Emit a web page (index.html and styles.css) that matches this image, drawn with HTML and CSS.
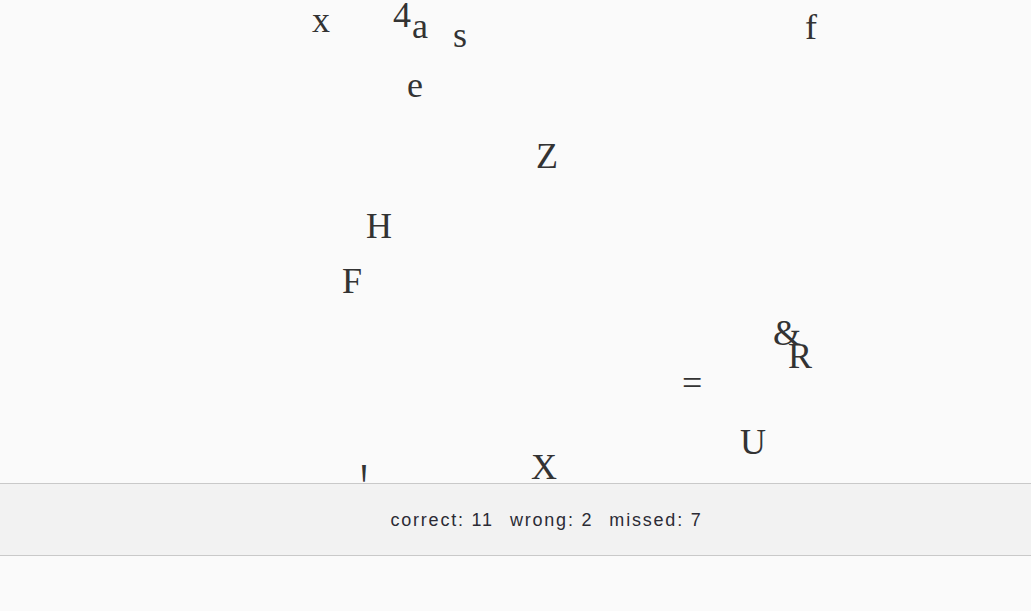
FILE: index.html
```html
<!DOCTYPE html>
<html>
<head>
<meta charset="utf-8">
<link rel="stylesheet" href="styles.css">
</head>
<body>
<div class="stage">
  <span class="ch" style="left:312px;top:2px">x</span>
  <span class="ch" style="left:393px;top:-3px">4</span>
  <span class="ch" style="left:412px;top:8px">a</span>
  <span class="ch" style="left:453px;top:17px">s</span>
  <span class="ch" style="left:805px;top:9px">f</span>
  <span class="ch" style="left:407px;top:67px">e</span>
  <span class="ch" style="left:536px;top:138px">Z</span>
  <span class="ch" style="left:366px;top:208px">H</span>
  <span class="ch" style="left:342px;top:263px">F</span>
  <span class="ch" style="left:773px;top:315px">&amp;</span>
  <span class="ch" style="left:788px;top:338px">R</span>
  <span class="ch" style="left:682px;top:365px">=</span>
  <span class="ch" style="left:740px;top:424px">U</span>
  <span class="ch" style="left:531px;top:449px">X</span>
  <span class="ch" style="left:358px;top:459px">!</span>
</div>
<div class="score">
  <span class="stat">correct: 11</span>
  <span class="stat">wrong: 2</span>
  <span class="stat">missed: 7</span>
</div>
</body>
</html>
```
FILE: styles.css
```css
html, body {
  margin: 0;
  padding: 0;
  background: #fafafa;
}
.stage {
  position: relative;
  height: 483px;
  overflow: hidden;
}
.ch {
  position: absolute;
  font-family: "Liberation Serif", serif;
  font-size: 36px;
  line-height: 36px;
  color: #333333;
}
.score {
  height: 69px;
  padding-top: 2px;
  border-top: 1px solid #c9c9c9;
  border-bottom: 1px solid #c9c9c9;
  background: #f2f2f2;
  display: flex;
  align-items: center;
  justify-content: center;
  gap: 16px;
  padding-left: 62px;
  font-family: "Liberation Sans", Arial, sans-serif;
  font-size: 18px;
  letter-spacing: 1.8px;
  color: #2b2b35;
}
```
